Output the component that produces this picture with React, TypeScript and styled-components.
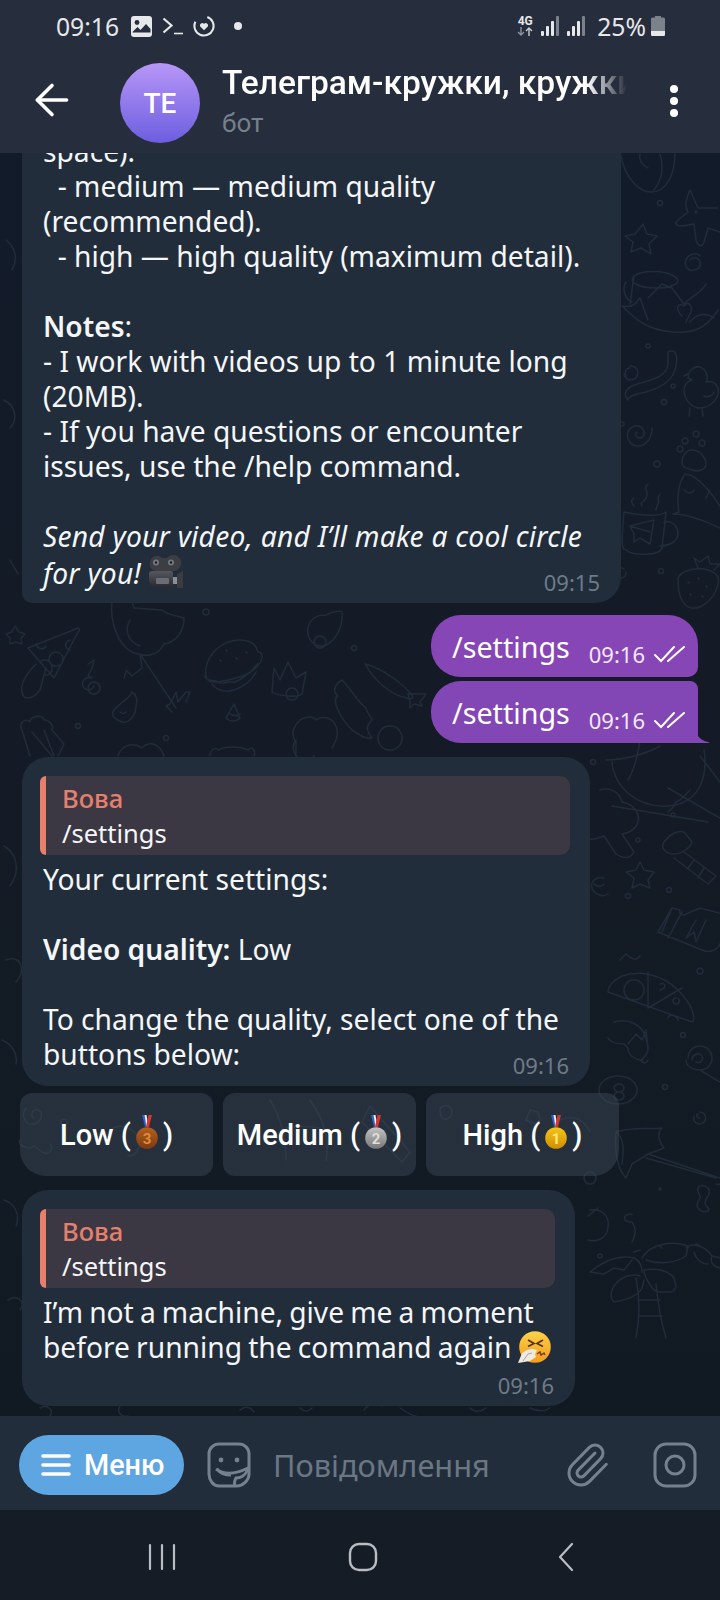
import React from 'react';
import styled, { createGlobalStyle } from 'styled-components';
import { ArrowLeft, Paperclip } from 'lucide-react';

const Global = createGlobalStyle`
  html, body { margin: 0; padding: 0; background: #141b25; }
  * { box-sizing: border-box; }
`;

const BODY_FONT = `"Noto Sans", "Open Sans", sans-serif`;
const UI_FONT = `Roboto, "Noto Sans", sans-serif`;

const Medal = ({ n, from, to, digit }: { n: string; from: string; to: string; digit: string }) => (
  <svg width="22" height="34" viewBox="0 0 22 34">
    <defs>
      <linearGradient id={`m${n}`} x1="0" y1="0" x2="0" y2="1">
        <stop offset="0" stopColor={from} />
        <stop offset="1" stopColor={to} />
      </linearGradient>
    </defs>
    <path d="M6 0h2.500l3 12H9z" fill="#2f5fc4" />
    <path d="M8.500 0h2l2 12h-2z" fill="#eee" />
    <path d="M16 0h-3.500l-2.500 12h3z" fill="#d8332c" />
    <circle cx="11" cy="23" r="10.800" fill={`url(#m${n})`} />
    <text x="11" y="28.500" textAnchor="middle" fontFamily="Roboto" fontWeight="700" fontSize="15" fill={digit}>{n}</text>
  </svg>
);

const CameraEmoji = () => (
  <svg width="36" height="36" viewBox="0 0 36 36">
    <defs>
      <linearGradient id="camBody" x1="0" y1="0" x2="0" y2="1">
        <stop offset="0" stopColor="#55585f" />
        <stop offset="1" stopColor="#26282d" />
      </linearGradient>
    </defs>
    <path d="M2 8a7 7 0 0 1 12-4h5a8 8 0 1 1 5 13H8a7 7 0 0 1-6-9z" fill="#3c3e44" />
    <circle cx="8" cy="8.500" r="3" fill="#75787e" />
    <circle cx="8" cy="8.500" r="1.200" fill="#1d1f23" />
    <circle cx="23" cy="8.500" r="3" fill="#75787e" />
    <circle cx="23" cy="8.500" r="1.200" fill="#1d1f23" />
    <path d="M4 17h19a2 2 0 0 1 2 2v12a3 3 0 0 1-3 3H10C5 34 1 30 1 25v-5a3 3 0 0 1 3-3z" fill="url(#camBody)" />
    <rect x="8" y="24" width="13" height="6" rx="1" fill="#6a6d73" />
    <rect x="25" y="23" width="4" height="7" fill="#8c8f95" />
    <path d="M29 20l6-3v17h-6z" fill="#3a3c41" />
  </svg>
);

const SneezeEmoji = () => (
  <svg width="33" height="33" viewBox="0 0 33 33">
    <defs>
      <linearGradient id="face" x1="0" y1="0" x2="0" y2="1">
        <stop offset="0" stopColor="#fcd24a" />
        <stop offset="1" stopColor="#f49b1c" />
      </linearGradient>
    </defs>
    <circle cx="17" cy="16" r="15.800" fill="url(#face)" />
    <path d="M10 9l6 3.500-6 3M25 9l-6 3.500 6 3" fill="none" stroke="#5b3208" strokeWidth="1.700" />
    <path d="M19 23l3-2 1 3 3-2 1 2" fill="none" stroke="#7a3f0a" strokeWidth="1.500" />
    <path d="M0 32l4-10 5-3 5-1 5 1-2 4 1 3-6 4-6 1z" fill="#eeeae2" />
    <path d="M5 30l5-7 4-1" fill="none" stroke="#aaa59b" strokeWidth="1" />
  </svg>
);

// coordinates are page pixels, the viewBox starts where the chat starts
const Wallpaper = () => (
  <DoodleLayer viewBox="0 153 720 1263">
    <g fill="none" stroke="#212c3a" strokeWidth="1.500" strokeLinecap="round" strokeLinejoin="round">
      {/* right strip, upper part */}
      <path d="M621 156c4 22 18 36 30 36 16 0 24-18 24-40M640 154c-2 8 4 12 8 14M660 154c4 14 2 26-6 36" />
      <circle cx="660" cy="203" r="2.500" />
      <path d="M690 190l8 18 20 0M690 190c-4 10-6 16-2 22l-10 8c-4 4-2 6 4 6l12-2 2 16c2 6 6 8 8 2l4-14 12 4" />
      <circle cx="696" cy="212" r="1" />
      <path d="M643 224l4 10 10 2-8 8 2 10-10-6-10 4 2-10-8-6 10-2z" />
      <path d="M690 260a6 6 0 1 1 4 10c-6 2-10-4-8-10s10-8 14-4" />
      <path d="M634 276c8-6 30-6 40 0s0 12-18 12-28-6-22-12zM634 276l-4 28M626 282c-4 6-2 16 6 20M622 306c10 2 14-2 18-8l8 22M648 298l14-14 10 4 12 16c8-8 18-12 22-20M622 306c14 14 26 24 50 26s36-6 46-22M682 316c-8-8-4-14 2-10 4-6 10 0 6 8l-4 8M690 322c6-8 16-10 24-4" />
      <circle cx="648" cy="346" r="2" />
      <path d="M668 352c8-4 10 4 8 14-2 14-16 22-30 26-10 2-18 4-18 8-4-4-4-10 4-14 14-6 34-6 36-22z" />
      <path d="M630 366a7 7 0 1 1-6 8M630 368c-4 0-6 4-4 8" />
      <circle cx="673" cy="386" r="2" />
      <circle cx="664" cy="402" r="2.500" />
      <path d="M688 378c0-8 8-14 14-10s6 12 4 14c8-2 14 4 12 12s-10 14-18 14-16-8-16-18c0-4 2-8 8-10zM690 408l-1 8M702 408l1 8M704 396c4 2 8 0 10-4M688 374l-4 2" />
      <circle cx="622" cy="424" r="2" />
      <path d="M652 428c0 10-6 18-14 18s-12-8-10-14 10-8 14-4 2 10-2 10-6-4-3-6" />
      <circle cx="657" cy="464" r="3" />
      <path d="M692 450c8 0 14 8 14 14s-8 8-14 6-10-2-10-8 4-12 10-12zM685 438a3 3 0 1 0 .1 0M696 431a3 3 0 1 0 .1 0M702 440a3 3 0 1 0 .1 0M680 446a3 3 0 1 0 .1 0" />
      <path d="M685 474c8 0 20 10 35 32M685 474c-8 10-8 30-6 38l-6 2c14 0 30 6 47 14M684 490c4 4 8 4 10 0M710 490l-4 8" />
      <path d="M624 512c10 2 34 6 42 0l-4 36c-2 8-30 8-36 2-2-2-6 6-2-38zM664 522c8-2 14 4 14 12s-10 12-18 12M630 526l24-6-4 24-10-6-6 4 0-8zM630 526l20 6M634 498c-4 2-2 6 0 8M648 484c-6 4 2 8-2 14s-6 4-4 8M660 494c-4 4 0 6-2 10s-2 4-2 6" />
      <circle cx="661" cy="571" r="2.500" />
      <path d="M678 580c0-10 24-16 38-6 6 6 0 24-14 32-12 6-24 0-24-26zM698 568l-4-10 6 4 8-6 2 8 10 0-6 6M688 582l1 1M698 578l1 1M706 586l1 1M690 594l1 1M702 596l1 1" />
      <path d="M626 572a5 5 0 1 1-2-3" />

      {/* band below the first bubble */}
      <path d="M15 626l4 6 6 2-4 4 1 6-6-2-6 2 0-6-4-4 6-2z" />
      <path d="M28 648l50-20c2 0 2 2 0 4l-24 46zM36 644c2 6 8 6 10 2M56 652a7 7 0 1 0 .1 0M70 640c-6 2-6 8 0 10M40 662c4-4 12-2 12 6s-8 8-8 6" />
      <path d="M36 664c-8 8-16 18-14 28s12 6 18-2l6-22" />
      <path d="M88 664l6-4-2 8-4 8 4 2M90 678a6 6 0 1 0 4 8M94 682a6 6 0 1 0 .1 0" />
      <path d="M112 602c-2 16 4 42 20 50 14 6 26 4 32-8 12-2 20-12 20-26-8-2-18-4-22-8l-28-2-2-6M130 620c-6 10-2 22 10 26M140 654l2 14-10 8-6-6M126 672l-2 6M140 654l36 54" />
      <path d="M166 706l4-2 6-12 2 10 8-10 4 0-4 10M166 706l6 6M84 600c4-6 16-8 26-8" />
      <path d="M118 706c6-6 12-8 14-14 4 2 6 8 4 14 0 10-8 18-14 16s-12-6-8-12l4-4M120 712c2 2 4 2 6 0" />
      <circle cx="206" cy="612" r="3" />
      <path d="M240 640c-18 0-32 14-34 28s2 18 30 10 30-26 22-26c-2-8-8-12-18-12zM204 676c6 8 10 2 14 6s10-2 14 0 12-6 16-8 6-8 10-10M212 684c6 8 16 8 22 6 12-4 18-10 22-18M226 650l1 1M236 658l1 1M220 660l1 1M246 652l1 1" />
      <path d="M274 668l6 12 8-18 8 16 10-6-4 22c-4 4-24 2-30-2zM292 688a6 6 0 1 0 .1 0" />
      <path d="M328 614c4-2 14-4 14-2s2 12-6 24-18 12-24 6-6-18 2-24 10 0 14-4zM320 636a6 6 0 1 0 .1 0" />
      <path d="M234 704l6 14c-4 4-10 4-14 0zM230 714c4 2 8 2 10 0" />
      <circle cx="354" cy="648" r="2.500" />
      <path d="M365 664c16 4 36 18 46 30 4 4 0 6-4 4-14-2-32-16-42-34zM408 694l18 0-6 8 2 4-8-2-4 4 0-8zM385 672l4 4" />
      <path d="M342 680c8 8 16 22 24 28 2 8 4 6 6 12-8 8-4 12 0 18-6 2-14-4-20-8-10-10-22-30-14-34-8-6 0-14 4-16zM390 726a12 12 0 1 0 .1 0" />
      <path d="M300 720c-6 6-10 14-4 22l0 16M300 720c6-4 14-4 16 0 4-4 16-4 20 6s-2 18-4 22M296 740c-4 4-4 12 2 18 6 4 12 4 16-2" />
      <path d="M30 756l-8-26c-4-8 4-12 8-8 0-6 12-8 14-2 6 0 10 6 8 10l12 14-6 12M32 732l20 24M44 730l10 26" />
      <circle cx="78" cy="726" r="2.500" />
      <circle cx="166" cy="738" r="2.500" />
      <path d="M210 756c0-6 6-10 8-6 8-4 22-4 30 0 4-4 8 0 6 6M118 756c4-12 16-14 24-8 8-8 18-4 22 8" />

      {/* right strip, lower part */}
      <path d="M612 762c2 24 24 46 56 44s40-30 36-56M606 760c18 0 40-6 54-14M640 740c-2 14-6 30-12 40M612 806l96 16M690 790c-6 6-8 10-14 12-2 6-6 8-8 10M668 788l52 30M700 756l20 26" />
      <circle cx="593" cy="762" r="2.500" />
      <path d="M600 790c12-4 20 4 22 12 12 2 18 12 16 20s-12 12-16 12l12 18c-4 8-12 6-18 2l-12-18c-10 4-14 4-20 2" />
      <circle cx="673" cy="815" r="2" />
      <circle cx="638" cy="840" r="2" />
      <path d="M664 842c6-8 14-12 20-10l8 10c-2 6-10 12-18 12s-14-6-10-12zM684 852l32 24-8 8-34-26M694 860l-6 8M704 868l-6 10" />
      <path d="M640 862l4 8 10 2-6 8 2 8-10-4-8 4 2-10-8-6 10-2z" />
      <circle cx="669" cy="890" r="2.500" />
      <path d="M604 878c-8-2-14 4-12 10s10 10 16 6M594 884c2 2 8 4 10 0" />
      <path d="M658 932l14-24 8 2c-2 4 4 6 6 4l14-6 38 10M658 932l44 18c8 4 18 0 20-12M672 908l-10 24M682 912c-6 10-10 20-14 26M696 920l-10 18 8-6 2 10 10-22" />
      <circle cx="628" cy="896" r="2.500" />
      <path d="M620 960l6-6c4 4 10 8 14 2M700 968a3 3 0 1 0 .1 0" />
      <path d="M622 976c16-6 40-2 56 14s18 30 14 32l-84-30c0-6 6-12 14-16zM648 972v36M648 1008l34-20M634 980a10 10 0 1 0 .1 0" />
      <path d="M660 984c4-2 6 2 4 4l-4 2M676 998c-4 0-4 6 0 6s4-4 2-6M668 1018c0-4 8-4 10 2" />
      <path d="M614 1022c14-4 28 2 32 16s2 14-4 22c-6 0-14-4-14-12l-4-4c-8 0-14-2-16-6M640 1060c4 4 6 4 8 0M628 1044l8-10 6 6 4-10 2 20" />
      <circle cx="683" cy="1035" r="2.500" />
      <path d="M688 1058a12 12 0 1 1 12 12c-8 0-14-4-14-10M692 1060c0-6 8-8 10-4s-2 8-6 6M700 1070l20 12" />
      <circle cx="665" cy="1087" r="2.500" />
      <path d="M618 1076a19 14 0 1 0 .1 0M619 1084a5 4 0 1 0 .1 0M619 1092a5 4 0 1 0 .1 0" />
      <path d="M700 1112a6 6 0 1 1-6 4M698 1114c-2 0-2 4 2 4" />
      <path d="M616 1132c18-6 36-2 46-4-6 6-2 16 2 20l-16 6-16 10-6 14c-8-8-12-26-10-46zM616 1132c8 6 8 16 6 32M648 1154l72 24c6 0 2 8-4 6M646 1158l70 20" />
      <path d="M660 1188a1 1 0 1 0 .1 0M700 1186c6-2 12 4 8 10s-4 8 0 12-6 6-10 0 4-8 2-12-4-8 0-10z" />
      <path d="M590 1210c12-2 20 6 18 18s-12 14-20 12M598 1208l-10 8" />
      <path d="M632 1214c-10 0-10 8 0 8 2 4 6 8 0 20M590 1172a6 6 0 1 0 .1 0" />
      <path d="M590 1272c12-10 28-18 44-14 4 2 8 6 8 14M642 1258c8-14 30-18 46-12l-2 10c-12 8-28 8-40 4M590 1272l14 2 10-6 10 2 8-10M640 1276c-12-4-24 4-28 14-2 6 0 10 2 12 12-2 24-6 28-14l2-8M644 1270c0 8 10 22 14 22h12c4 0 6-4 6-6l-2-8c-6-8-18-10-30-8M636 1278c4 20 4 40 0 60M656 1284c2 20 4 34 10 54M638 1300h22M640 1316h22" />
      <path d="M686 1248c6-6 20-2 26 8l8 2M694 1252c2 8 8 12 14 12M712 1256c-2 6 0 10 8 12M696 1244l4 2" />
      <circle cx="600" cy="1256" r="2" />
      <path d="M634 1252l6-2M660 1246l2 2" />

      {/* through the buttons and at the left edge */}
      <path d="M26 1108c-6 8 0 18 8 16s10-12 4-14-8 6-4 8" />
      <path d="M20 1140c-4 6 10 10 14 6l8 6c8 4 12-4 8-8M110 1130c10-8 24-2 28 8s-2 18-10 18" />
      <path d="M270 1100c10 16 16 36 16 60M310 1100c14 20 20 40 16 60M286 1128c10-2 20-2 34 0" />
      <path d="M370 1106l40 46-8 10-40-40zM440 1110c0-6 12-6 12 2s-12 12-12-2" />
      <circle cx="64" cy="1122" r="3" />
      <path d="M530 1110l8 2 2 8-6 4-8-4zM560 1120c14-6 24 0 30 12" />
      <path d="M6 240c10 8 12 20 6 30M4 400c12 6 14 20 6 28M10 560l8 14M4 846c14 8 16 26 6 40M6 960c16-6 20 12 10 22M2 1040c10 4 16 14 14 24M4 1200c12 4 16 16 12 26M8 1300c10-6 18 2 12 10" />

      {/* band above the input bar */}
      <path d="M40 1408c8-4 14 2 10 8M120 1406c-4 6 2 12 8 10M240 1410c4-4 10-4 14 2M300 1408c4 4 8 4 12 0M364 1410c4-6 12-8 18-4M400 1408c6 4 12 8 16 8M470 1408c4 4 10 4 16 0M530 1408c8 4 14 4 20 0" />
    </g>
  </DoodleLayer>
);

export default function App() {
  return (
    <Screen>
      <Global />
      <TopArea>
        <StatusBar>
          <StatusLeft>
            <StatusTime>09:16</StatusTime>
            <svg width="21" height="21" viewBox="0 0 21 21">
              <rect width="21" height="21" rx="3" fill="#e6e8ea" />
              <circle cx="6" cy="6.500" r="2.400" fill="#262d3c" />
              <path d="M1.500 16l5-5 3 3 5.500-6 4.500 5v3.500h-18z" fill="#262d3c" />
            </svg>
            <svg width="21" height="18" viewBox="0 0 21 18" fill="none" stroke="#e6e8ea">
              <path d="M1.500 1.500l8 7-8 7" strokeWidth="2.200" />
              <path d="M12 16.500h9" strokeWidth="1.600" />
            </svg>
            <svg width="22" height="22" viewBox="0 0 23 23" fill="none">
              <path d="M15 2.100a10 10 0 1 1-12.500 5" stroke="#e6e8ea" strokeWidth="2.200" />
              <path d="M11.500 16l-4-4a2.400 2.400 0 0 1 4-2.600 2.400 2.400 0 0 1 4 2.600z" fill="#e6e8ea" />
            </svg>
            <StatusDot />
          </StatusLeft>
          <StatusRight>
            <NetworkIcon>
              <NetworkLabel>4G</NetworkLabel>
              <svg width="16" height="9" viewBox="0 0 16 9" fill="none" stroke="#8b929c" strokeWidth="1.400">
                <path d="M4 0v8M1 5l3 3 3-3" />
                <path d="M12 9V1M9 4l3-3 3 3" stroke="#c7ccd1" />
              </svg>
            </NetworkIcon>
            <SignalBars />
            <SignalBars />
            <StatusPercent>25%</StatusPercent>
            <svg width="14" height="20" viewBox="0 0 14 20">
              <path d="M4 0h6v1.500h2.500a1.500 1.500 0 0 1 1.500 1.500v15.500a1.500 1.500 0 0 1-1.500 1.500h-11A1.500 1.500 0 0 1 0 18.500V3a1.500 1.500 0 0 1 1.500-1.500H4z" fill="#7c828c" />
              <path d="M0 15h14v3.500a1.500 1.500 0 0 1-1.500 1.500h-11A1.500 1.500 0 0 1 0 18.500z" fill="#e6e8ea" />
            </svg>
          </StatusRight>
        </StatusBar>
        <Header>
          <BackButton>
            <ArrowLeft size={50} strokeWidth={3.600} absoluteStrokeWidth color="#fff" />
          </BackButton>
          <Avatar>TE</Avatar>
          <TitleBlock>
            <Title>Телеграм-кружки, кружки</Title>
            <Subtitle>бот</Subtitle>
          </TitleBlock>
          <MoreDots>
            <Dot />
            <Dot />
            <Dot />
          </MoreDots>
        </Header>
      </TopArea>

      <Chat>
        <Wallpaper />
        <Bubble $width={599} $corner="first" $mb={12}>
          <Text>{`space).
  - medium — medium quality (recommended).
  - high — high quality (maximum detail).

`}<b>Notes</b>{`:
- I work with videos up to 1 minute long (20MB).
- If you have questions or encounter issues, use the /help command.

`}<i>Send your video, and I’ll make a cool circle for you!</i> <InlineEmoji><CameraEmoji /></InlineEmoji></Text>
          <Time $overlap={22}>09:15</Time>
        </Bubble>

        <OutBubble $mb={4}>
          <OutText>/settings</OutText>
          <OutMeta>09:16 <Checks /></OutMeta>
        </OutBubble>
        <OutBubble $tail $mb={14}>
          <OutText>/settings</OutText>
          <OutMeta>09:16 <Checks /></OutMeta>
          <Tail width="16" height="20" viewBox="0 0 16 20">
            <path d="M0 0c0 10 3 17 13 19 2 .4 2 1 0 1H0z" fill="#8346b5" />
          </Tail>
        </OutBubble>

        <Bubble $width={568} $corner="all" $mb={7}>
          <Reply>
            <ReplyName>Вова</ReplyName>
            <ReplyText>/settings</ReplyText>
          </Reply>
          <Text>{`Your current settings:

`}<b>Video quality:</b>{` Low

To change the quality, select one of the buttons below:`}</Text>
          <Time $overlap={20}>09:16</Time>
        </Bubble>

        <Keyboard>
          <KeyButton $pos="left">Low (<Medal n="3" from="#b4601f" to="#7e3a10" digit="#e08a3a" />)</KeyButton>
          <KeyButton $pos="mid">Medium (<Medal n="2" from="#c4c4c4" to="#777" digit="#ddd" />)</KeyButton>
          <KeyButton $pos="right">High (<Medal n="1" from="#f5c518" to="#d18f00" digit="#ffe680" />)</KeyButton>
        </Keyboard>

        <Bubble $width={553} $corner="all" $mb={10}>
          <Reply>
            <ReplyName>Вова</ReplyName>
            <ReplyText>/settings</ReplyText>
          </Reply>
          <Text $tightWords>I’m not a machine, give me a moment before running the command again <InlineEmoji><SneezeEmoji /></InlineEmoji></Text>
          <Time>09:16</Time>
        </Bubble>
      </Chat>

      <InputBar>
        <MenuButton>
          <svg width="30" height="24" viewBox="0 0 30 24" fill="none" stroke="#fff" strokeWidth="3.600" strokeLinecap="round">
            <path d="M2 3h26M2 12h26M2 21h26" />
          </svg>
          <span>Меню</span>
        </MenuButton>
        <StickerIcon width="44" height="46" viewBox="0 0 44 46" fill="none" stroke="#75818d" strokeWidth="3">
          <path d="M12 2h20a10 10 0 0 1 10 10v20c0 7-7 12-12 12H12C6 44 2 38 2 32V12A10 10 0 0 1 12 2z" />
          <circle cx="14" cy="18" r="2.400" fill="#75818d" stroke="none" />
          <circle cx="30" cy="18" r="2.400" fill="#75818d" stroke="none" />
          <path d="M9 27c8 6 18 6 32-1-2 8-8 10-12 10-2 4-2 6-1 8M10 27c3 4 8 6 14 6" />
        </StickerIcon>
        <Placeholder>Повідомлення</Placeholder>
        <InputIcons>
          <PaperclipIcon>
            <Paperclip size={48} strokeWidth={3} absoluteStrokeWidth color="#75818d" />
          </PaperclipIcon>
          <svg width="44" height="46" viewBox="0 0 44 46" fill="none" stroke="#75818d" strokeWidth="3">
            <rect x="2" y="2" width="40" height="42" rx="11" />
            <circle cx="22" cy="23" r="9" />
          </svg>
        </InputIcons>
      </InputBar>

      <NavBar>
        <svg width="28" height="28" viewBox="0 0 28 28" stroke="#b9bdc3" strokeWidth="2.200" strokeLinecap="round">
          <path d="M2 2v24M14 2v24M26 2v24" />
        </svg>
        <HomeIcon width="30" height="30" viewBox="0 0 30 30" fill="none" stroke="#b9bdc3" strokeWidth="2.400">
          <rect x="2" y="2" width="26" height="26" rx="9" />
        </HomeIcon>
        <svg width="18" height="30" viewBox="0 0 18 30" fill="none" stroke="#b9bdc3" strokeWidth="2.200" strokeLinecap="round" strokeLinejoin="round">
          <path d="M15 2L3 15l12 13" />
        </svg>
      </NavBar>
    </Screen>
  );
}

const Checks = () => (
  <svg width="32" height="18" viewBox="0 0 32 18" fill="none" stroke="#fff" strokeWidth="2" strokeLinecap="round">
    <path d="M1 10l6 6L20 2M14 16L30 2" />
  </svg>
);

const SignalBars = () => (
  <svg width="18" height="20" viewBox="0 0 18 20">
    <rect x="0" y="15" width="3" height="5" rx="1" fill="#e6e8ea" />
    <rect x="5" y="10" width="3" height="10" rx="1" fill="#e6e8ea" />
    <rect x="10" y="5" width="3" height="15" rx="1" fill="#e6e8ea" />
    <rect x="15" y="0" width="3" height="20" rx="1" fill="#7c828c" />
  </svg>
);

const Screen = styled.div`
  width: 720px;
  height: 1600px;
  display: flex;
  flex-direction: column;
  overflow: hidden;
  font-family: ${BODY_FONT};
  background: #141b25;
`;

const TopArea = styled.div`
  height: 153px;
  flex: none;
  background: #262d3c;
  position: relative;
  z-index: 2;
`;

const StatusBar = styled.div`
  height: 54px;
  padding: 0 55px 2px 56px;
  display: flex;
  align-items: center;
  justify-content: space-between;
  color: #e6e8ea;
`;

const StatusLeft = styled.div`
  display: flex;
  align-items: center;
  gap: 10px;
`;

const StatusRight = styled.div`
  display: flex;
  align-items: center;
  gap: 8px;
`;

const StatusTime = styled.span`
  font-size: 24.700px;
  margin-right: 2px;
`;

const StatusPercent = styled.span`
  font-size: 24.700px;
  margin-left: 4px;
  margin-right: -3px;
`;

const StatusDot = styled.span`
  width: 8px;
  height: 8px;
  border-radius: 50%;
  background: #e6e8ea;
  margin-left: 9px;
`;

const NetworkIcon = styled.div`
  display: flex;
  flex-direction: column;
  align-items: center;
`;

const NetworkLabel = styled.span`
  font-family: ${UI_FONT};
  font-weight: 700;
  font-size: 12px;
  line-height: 11px;
`;

const Header = styled.div`
  height: 99px;
  display: flex;
  align-items: flex-start;
`;

const BackButton = styled.div`
  width: 120px;
  flex: none;
  padding: 21px 0 0 27px;
  display: flex;
`;

const Avatar = styled.div`
  width: 80px;
  height: 80px;
  flex: none;
  border-radius: 50%;
  margin-top: 9px;
  background: linear-gradient(180deg, #b796f7 0%, #6d5ee0 100%);
  color: #fff;
  font-family: ${UI_FONT};
  font-weight: 500;
  font-size: 28px;
  display: flex;
  align-items: center;
  justify-content: center;
`;

const TitleBlock = styled.div`
  margin-left: 22px;
  width: 410px;
  padding-top: 9px;
  font-family: ${UI_FONT};
`;

const Title = styled.div`
  color: #fff;
  font-weight: 500;
  font-size: 33.500px;
  line-height: 40px;
  white-space: nowrap;
  overflow: hidden;
  mask-image: linear-gradient(90deg, #000 365px, transparent 405px);
`;

const Subtitle = styled.div`
  color: #75818d;
  font-size: 26px;
  line-height: 34px;
  margin-top: 3px;
`;

const MoreDots = styled.div`
  margin-left: 38px;
  padding-top: 31px;
  display: flex;
  flex-direction: column;
  gap: 4px;
`;

const Dot = styled.span`
  width: 8px;
  height: 8px;
  border-radius: 50%;
  background: #fff;
`;

const Chat = styled.div`
  height: 1263px;
  flex: none;
  position: relative;
  overflow: hidden;
  display: flex;
  flex-direction: column;
  justify-content: flex-end;
  padding: 0 10px 0 22px;
  background: linear-gradient(180deg, #121b2a 0%, #141b26 45%, #111a22 100%);
`;

const DoodleLayer = styled.svg`
  position: absolute;
  inset: 0;
  width: 100%;
  height: 100%;
`;

const Bubble = styled.div<{ $width: number; $corner: 'first' | 'all'; $mb: number }>`
  position: relative;
  flex: none;
  width: ${(p) => p.$width}px;
  margin-bottom: ${(p) => p.$mb}px;
  padding: 19px 21px 8px;
  background: #212d3b;
  border-radius: 26px;
  border-bottom-left-radius: ${(p) => (p.$corner === 'first' ? '10px' : '26px')};
  border-top-left-radius: ${(p) => (p.$corner === 'first' ? '10px' : '26px')};
`;

const Text = styled.div<{ $tightWords?: boolean }>`
  font-size: 28.200px;
  line-height: 35px;
  color: #f4f6f7;
  white-space: pre-wrap;
  word-spacing: ${(p) => (p.$tightWords ? '-1.200px' : '0')};

  b {
    font-weight: 600;
  }

  i {
    letter-spacing: 0.250px;
  }
`;

// $overlap pulls the time up beside the last text line when there is room for it
const Time = styled.div<{ $overlap?: number }>`
  font-size: 22px;
  line-height: 26px;
  color: #6e7b88;
  text-align: right;
  margin-top: ${(p) => (p.$overlap ? `-${p.$overlap}px` : '7px')};
`;

const InlineEmoji = styled.span`
  display: inline-block;
  height: 30px;
  vertical-align: -6px;
  line-height: 0;
`;

const OutBubble = styled.div<{ $tail?: boolean; $mb: number }>`
  position: relative;
  flex: none;
  align-self: flex-end;
  width: 267px;
  height: 62px;
  margin-bottom: ${(p) => p.$mb}px;
  margin-right: 12px;
  padding: 0 12px 0 21px;
  display: flex;
  align-items: center;
  justify-content: space-between;
  background: ${(p) => (p.$tail ? '#8346b5' : '#8746b5')};
  border-radius: 30px;
  border-top-right-radius: ${(p) => (p.$tail ? '8px' : '30px')};
  border-bottom-right-radius: ${(p) => (p.$tail ? '0' : '10px')};
`;

const OutText = styled.span`
  font-size: 28.700px;
  color: #fff;
`;

const OutMeta = styled.span`
  font-size: 22px;
  color: #f2e9fa;
  display: flex;
  align-items: center;
  gap: 9px;
  margin-top: 16px;
`;

const Tail = styled.svg`
  position: absolute;
  right: -13px;
  bottom: 0;
`;

const Reply = styled.div`
  background: #3b3843;
  border-left: 6px solid #e5806f;
  border-radius: 6px 10px 10px 6px;
  padding: 5px 16px 4px 16px;
  margin: 0 -1px 7px -3px;
`;

const ReplyName = styled.div`
  color: #e5806f;
  font-weight: 500;
  font-size: 25.500px;
  line-height: 35px;
`;

const ReplyText = styled.div`
  color: #f4f6f7;
  font-size: 25.500px;
  line-height: 35px;
`;

const Keyboard = styled.div`
  position: relative;
  flex: none;
  display: flex;
  gap: 10px;
  margin: 0 0 14px -2px;
`;

const KeyButton = styled.div<{ $pos: 'left' | 'mid' | 'right' }>`
  width: 193px;
  height: 83px;
  display: flex;
  align-items: center;
  justify-content: center;
  gap: 5px;
  background: rgba(60, 74, 90, 0.48);
  color: #fff;
  font-family: ${UI_FONT};
  font-weight: 500;
  font-size: 29px;
  border-radius: 12px;
  border-bottom-left-radius: ${(p) => (p.$pos === 'left' ? '26px' : '12px')};
  border-bottom-right-radius: ${(p) => (p.$pos === 'right' ? '26px' : '12px')};

  svg {
    margin-top: -6px;
  }
`;

const InputBar = styled.div`
  height: 94px;
  flex: none;
  background: #212d3b;
  display: flex;
  align-items: center;
  padding: 4px 23px 0 19px;
`;

const MenuButton = styled.div`
  width: 165px;
  height: 60px;
  flex: none;
  border-radius: 30px;
  background: #5ea6e2;
  color: #fff;
  display: flex;
  align-items: center;
  gap: 13px;
  padding-left: 22px;
  font-family: ${UI_FONT};
  font-weight: 500;
  font-size: 28.800px;
`;

const StickerIcon = styled.svg`
  margin-left: 23px;
  flex: none;
`;

const Placeholder = styled.div`
  margin-left: 22px;
  flex: 1;
  color: #6b7783;
  font-size: 30.700px;
`;

const InputIcons = styled.div`
  display: flex;
  align-items: center;
  gap: 42px;
`;

const PaperclipIcon = styled.div`
  display: flex;
`;

const NavBar = styled.div`
  flex: 1;
  background: #161c25;
  display: flex;
  align-items: center;
  justify-content: space-between;
  padding: 4px 145px 0 148px;
`;

const HomeIcon = styled.svg`
  margin-right: 8px;
`;
